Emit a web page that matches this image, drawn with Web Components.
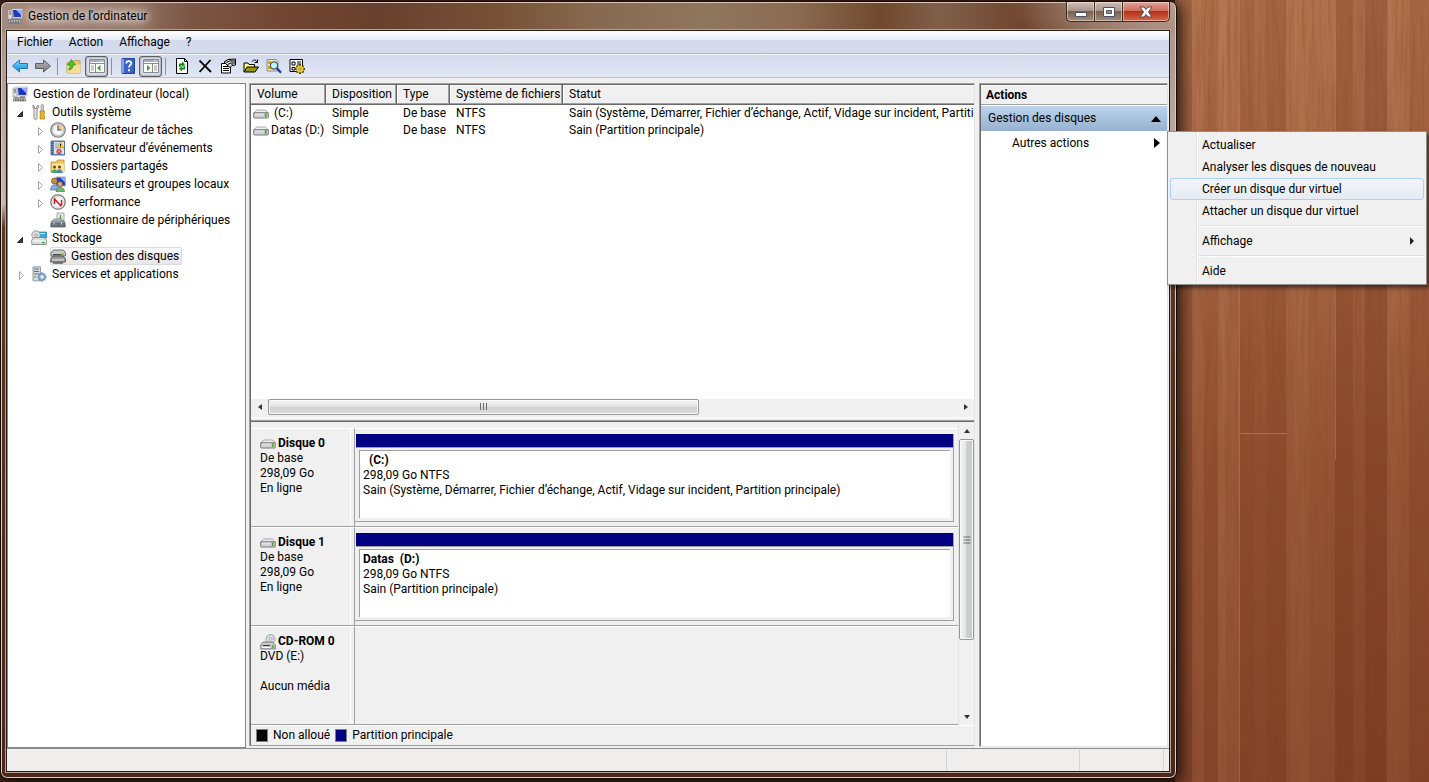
<!DOCTYPE html>
<html lang="fr">
<head>
<meta charset="utf-8">
<title>Gestion de l'ordinateur</title>
<style>
  html, body {
    height: 100%;
    margin: 0;
  }
  body {
    font: 12px/15px Roboto, "Noto Sans", sans-serif;
    color: #000;
    background: #4a2416;
    overflow: hidden;
  }
</style>
</head>
<body>
<desk-top>
  <app-window label="Gestion de l'ordinateur">
    <menu-bar></menu-bar>
    <tool-bar></tool-bar>
    <console-panes>
      <console-tree slot="tree">
        <tree-item icon="computer" root>Gestion de l’ordinateur (local)
          <tree-item slot="children" icon="tools" state="open">Outils système
            <tree-item slot="children" icon="clock" state="closed">Planificateur de tâches</tree-item>
            <tree-item slot="children" icon="events" state="closed">Observateur d’événements</tree-item>
            <tree-item slot="children" icon="shared" state="closed">Dossiers partagés</tree-item>
            <tree-item slot="children" icon="users" state="closed">Utilisateurs et groupes locaux</tree-item>
            <tree-item slot="children" icon="perf" state="closed">Performance</tree-item>
            <tree-item slot="children" icon="device">Gestionnaire de périphériques</tree-item>
          </tree-item>
          <tree-item slot="children" icon="storage" state="open">Stockage
            <tree-item slot="children" icon="disks" selected>Gestion des disques</tree-item>
          </tree-item>
          <tree-item slot="children" icon="services" state="closed">Services et applications</tree-item>
        </tree-item>
      </console-tree>
      <disk-manager slot="main">
        <volume-list slot="list"></volume-list>
        <disk-row icon="drive" name="Disque 0" info="De base|298,09 Go|En ligne" volume="  (C:)" size="298,09 Go NTFS" status="Sain (Système, Démarrer, Fichier d’échange, Actif, Vidage sur incident, Partition principale)"></disk-row>
        <disk-row icon="drive" name="Disque 1" info="De base|298,09 Go|En ligne" volume="Datas  (D:)" size="298,09 Go NTFS" status="Sain (Partition principale)"></disk-row>
        <disk-row icon="cdrom" name="CD-ROM 0" info="DVD (E:)||Aucun média"></disk-row>
      </disk-manager>
      <actions-pane slot="actions">
        <context-menu>
          <menu-item>Actualiser</menu-item>
          <menu-item>Analyser les disques de nouveau</menu-item>
          <menu-item active>Créer un disque dur virtuel</menu-item>
          <menu-item>Attacher un disque dur virtuel</menu-item>
          <menu-item separated submenu>Affichage</menu-item>
          <menu-item separated>Aide</menu-item>
        </context-menu>
      </actions-pane>
    </console-panes>
    <status-bar></status-bar>
  </app-window>
</desk-top>

<script>
const ICONS = {
  computer: `
    <path d="M5 1h10.500l-.5 9H6z" fill="#e8e8e4" stroke="#a9a9a4" stroke-width=".6"/>
    <path d="M6 2h8.500l-.4 7H6.600z" fill="#1d35c4"/><path d="M9 2h5.500l-.4 5z" fill="#8fb2ff"/>
    <path d="M1 2h4v9H1z" fill="#dedede" stroke="#8c8c8c" stroke-width=".6"/><path d="M2 4h2M2 6h2" stroke="#555"/>
    <path d="M8 10h5v1.500H8z" fill="#999"/>
    <path d="M2 11.500h11l1 3.500H1z" fill="#b9bdbd" stroke="#666" stroke-width=".6"/>
    <path d="M3 13h9M3 14.300h9" stroke="#444" stroke-width=".8" stroke-dasharray="1.500 1"/>`,
  back: `<path d="M.5 8L7.500 2v3.500h8v5h-8V14z" fill="url(#g)" stroke="#2079b5"/>
    <defs><linearGradient id="g" x2="0" y2="1"><stop stop-color="#9fe0ff"/><stop offset=".5" stop-color="#3db1ee"/><stop offset="1" stop-color="#2691d6"/></linearGradient></defs>`,
  forward: `<path d="M15.500 8L8.500 2v3.500h-8v5h8V14z" fill="url(#g)" stroke="#5f5f5f"/>
    <defs><linearGradient id="g" x2="0" y2="1"><stop stop-color="#b5b5b5"/><stop offset="1" stop-color="#7d7d7d"/></linearGradient></defs>`,
  up: `<path d="M1 15V4.500h6l1.500-2H14V15z" fill="#e9c66b" stroke="#c0953a" stroke-width=".8"/>
    <path d="M1.500 6.500h13L14 15H1.500z" fill="#f6dc94"/>
    <path d="M4 12c2-1 3-2.500 3-5h2.500L5.500 1.500 1.500 7H4c0 2-.2 3-1.500 4.500z" fill="#4fc02f" stroke="#247a18" stroke-width=".6"/>`,
  paneLeft: `<path d="M.5 1.500h15v13H.5z" fill="#fff" stroke="#878b94"/><path d="M1 2h14v2H1z" fill="#a5abb8"/>
    <path d="M11 3h1M13 3h1" stroke="#fff"/><path d="M1 5.500h14M6.500 6v8" stroke="#878b94"/>
    <path d="M2 8h3M2 10h3M2 12h3" stroke="#999"/><path d="M11.500 7v6L8 10z" fill="#39a32c"/>`,
  paneRight: `<path d="M.5 1.500h15v13H.5z" fill="#fff" stroke="#878b94"/><path d="M1 2h14v2H1z" fill="#a5abb8"/>
    <path d="M11 3h1M13 3h1" stroke="#fff"/><path d="M1 5.500h14M9.500 6v8" stroke="#878b94"/>
    <path d="M11 8h3M11 10h3M11 12h3" stroke="#999"/><path d="M4 7v6l3.500-3z" fill="#39a32c"/>`,
  help: `<path d="M2 .5h12.500v15H2z" fill="#3a62c8" stroke="#2443a0"/><path d="M2 1h2v14H2z" fill="#7f9fe6"/>
    <path d="M6.300 5.500c0-3.200 5-3 5-.3 0 2-2.300 1.900-2.300 4.300" fill="none" stroke="#fff" stroke-width="1.800"/><path d="M8 11.200h2v2H8z" fill="#fff"/>`,
  refresh: `<path d="M2.500.500h8l3 3v12h-11z" fill="#fff" stroke="#000"/><path d="M10.500.500v3h3" fill="none" stroke="#000"/>
    <path d="M5 9V5.500h3V3.500l3 2.800-3 2.700V7.500H6.500V9z" fill="#0d8d1d"/><path d="M11 8v3.500H8v2L5 10.700 8 8v1.700h1.500V8z" fill="#0d8d1d"/>`,
  remove: `<path d="M2.500 2.500L14 14M13.500 2L2.500 14" stroke="#000" stroke-width="1.800" fill="none"/>`,
  properties: `<path d="M1.500 5.500h9v9.500h-9z" fill="#fff" stroke="#000"/><path d="M3 8.500h6M3 10.500h6M3 12.500h6" stroke="#000"/>
    <path d="M4 4l4-2.500L15.500 1v6L12 7.500 10 9.500 7 7z" fill="#ddd" stroke="#000"/><path d="M6 4.500l5-2M7.500 6.500l3.500-1.500M12 2v5M14 2v4" stroke="#000"/>`,
  open: `<path d="M1 14V5h4l1 1.500h5.500V9" fill="#ffff80" stroke="#000"/><path d="M1 14l3-5h11.500l-3.500 5z" fill="#989800" stroke="#000"/>
    <path d="M9 3.500c1.500-2 4-2 5 .5M14.500 1.500v3h-3" fill="none" stroke="#000"/>`,
  find: `<path d="M1 1.500h9l2 2V13H1z" fill="#e8e4c0" stroke="#777" stroke-width=".8"/><path d="M2 3h3v3H2zM2 8h3v3H2z" fill="#c9a72d"/>
    <circle cx="8" cy="7.500" r="3.700" fill="#b5f3ff" stroke="#333"/><path d="M10.800 10.300L15 14.800" stroke="#1c2fb5" stroke-width="2.200"/>`,
  settings: `<path d="M1 1.500h12.500v12H1z" fill="#fff" stroke="#000"/><path d="M3 4h3v3H3z" fill="none" stroke="#000"/><path d="M3 9.500h3v2.500H3z" fill="none" stroke="#000"/><path d="M8 4h4M8 6h4" stroke="#000"/>
    <path d="M11 6v10M6 11h10M7.500 7.500l7 7M14.500 7.500l-7 7" stroke="#4d4200" stroke-width="2"/>
    <circle cx="11" cy="11" r="3.600" fill="#f5dc32" stroke="#8a7600" stroke-width=".7"/><circle cx="11" cy="11" r="1.200" fill="#fff" stroke="#4d4200" stroke-width=".6"/>`,
  tools: `<path d="M2 1v3l1 2v8.500c0 1.300 3 1.300 3 0V6l1.300-2V1L5.800 2.500v2H3.500v-2z" fill="#e4e4e4" stroke="#777" stroke-width=".8"/>
    <path d="M10 .8h2.500V7H10z" fill="#c9c9c9" stroke="#888" stroke-width=".6"/><path d="M9 7h4.500v2l-.8 1 .8 1.500V15H9v-3.500l.8-1.500L9 9z" fill="#f0b323" stroke="#b57b0a" stroke-width=".7"/>`,
  clock: `<circle cx="8" cy="8" r="7.300" fill="#d4d4d4" stroke="#777" stroke-width="1.100"/><circle cx="8" cy="8" r="5.500" fill="#f4f8fc" stroke="#aaa" stroke-width=".6"/>
    <path d="M8 8h5A5 5 0 0 0 8 3z" fill="#f3cf7a"/><path d="M8 3.500V8h3.500" fill="none" stroke="#444" stroke-width="1.100"/>`,
  events: `<path d="M1 1h13.500v14H1z" fill="#6f8fca" stroke="#3e5a92" stroke-width=".8"/><path d="M4 2h10v12H4z" fill="#dbe6f7"/><path d="M1.500 3h2M1.500 5.500h2M1.500 8h2M1.500 10.500h2M1.500 13h2" stroke="#27364f" stroke-width=".8"/>
    <path d="M5 4h3M5 6h2M5 8h2" stroke="#8194b8"/><path d="M10.500 2l3.500 6H7z" fill="#ffd52c" stroke="#b58b00" stroke-width=".6"/><path d="M10.500 4v2M10.500 6.600v.8" stroke="#000" stroke-width=".9"/>
    <circle cx="9" cy="11.500" r="2.600" fill="#d93535"/><path d="M8 10.500l2 2m0-2l-2 2" stroke="#fff" stroke-width=".8"/>`,
  shared: `<path d="M1 14V4h5l1.500-2H14v12z" fill="#efc75c" stroke="#b98d2c" stroke-width=".8"/><path d="M2 5.500h12V14H2z" fill="#ffe393"/>
    <circle cx="4.500" cy="9" r="1.500" fill="#6a4420"/><circle cx="9.500" cy="9" r="1.500" fill="#6a4420"/><path d="M1.500 15c0-5 6-5 6 0z" fill="#53a550"/><path d="M6.500 15c0-5 6-5 6 0z" fill="#3d87c9"/>`,
  users: `<path d="M6 1h9.500v9H6z" fill="#1d40c6" stroke="#b5b8bd"/><path d="M10 1.500h5v5z" fill="#8bb0ff"/>
    <circle cx="4.500" cy="5" r="3" fill="#c78c50" stroke="#6f4a22" stroke-width=".7"/><path d="M.500 14c0-7 8-7 8 0z" fill="#8aaede" stroke="#44689c" stroke-width=".6"/>
    <circle cx="10" cy="8" r="2.600" fill="#dfab78" stroke="#70451d" stroke-width=".7"/><path d="M6 15.700c0-6 8.500-6 8.500 0z" fill="#6eb577" stroke="#367540" stroke-width=".6"/>`,
  perf: `<circle cx="8" cy="8" r="7.200" fill="#fff" stroke="#777" stroke-width="1.300"/><circle cx="8" cy="8" r="5.300" fill="none" stroke="#c3c3c3" stroke-width=".8"/><path d="M4.500 10V5l6 6.500 1-.5V6" fill="none" stroke="#d51b1b" stroke-width="1.500"/>`,
  device: `<path d="M7 1h7v8H7z" fill="#e8ebea" stroke="#909594" stroke-width=".8"/><path d="M10.500 3v4" stroke="#49a443" stroke-width="1.500"/><path d="M2 9l2-2h7l3 2z" fill="#c5cbd0" stroke="#68717a" stroke-width=".7"/>
    <path d="M.8 9h14.400v2.500H.8z" fill="#8b969e"/><path d="M.8 11.500h14.400V15H.8z" fill="#68747d" stroke="#3e474e" stroke-width=".6"/><path d="M4 10.500v2M11.500 10.500v2" stroke="#e6e6e6"/>`,
  storage: `<path d="M7 2h8.500v6H7z" fill="#33a9de" stroke="#227ba6" stroke-width=".7"/><path d="M8 3h6v1H8z" fill="#b7e8fb"/><circle cx="5" cy="5" r="4.200" fill="#dfe2df" stroke="#858a86" stroke-width=".8"/><circle cx="5" cy="5" r="1.300" fill="#fff" stroke="#777" stroke-width=".6"/>
    <path d="M.800 10l2-2.500h10.500l2 2.500v4.500H.800z" fill="#dcdede" stroke="#777c7e" stroke-width=".8"/><path d="M1 11h14" stroke="#fff"/><path d="M11 12.500h2.500" stroke="#2faa2a" stroke-width="1.500"/>`,
  disks: `<path d="M1 5l2.500-3h10L15.500 5v3H1z" fill="#c9cbca" stroke="#565656" stroke-width=".8"/><path d="M3 6.500h8" stroke="#444"/><path d="M12.500 5v2.500" stroke="#57bd26" stroke-width="1.800"/>
    <path d="M.800 11L3 8h10l2.500 3v3H.800z" fill="#989a99" stroke="#444" stroke-width=".8"/><path d="M2 12h12" stroke="#ececec"/><path d="M3 15h10" stroke="#555" stroke-width="1.400"/>`,
  services: `<path d="M2 .8h7.500v14H2z" fill="#d8dde1" stroke="#7d868e" stroke-width=".8"/><path d="M3 3h5M3 5.500h5M3 8h5" stroke="#606a73" stroke-width="1.200"/><path d="M3 11h2" stroke="#35a635" stroke-width="1.200"/>
    <circle cx="11" cy="11" r="3.400" fill="#a7c3e0" stroke="#547ba5" stroke-width=".8"/><path d="M11 6.300v2M11 13.700v2M6.300 11h2M13.700 11h2M7.700 7.700l1.300 1.300M13 13l1.300 1.300M14.300 7.700L13 9M9 13l-1.300 1.300" stroke="#6a90ba" stroke-width="1.500"/><circle cx="11" cy="11" r="1.200" fill="#fff"/>`,
  drive: `<path d="M1 7l2.500-3h9L15 7z" fill="#f0f0f0" stroke="#888" stroke-width=".7"/><path d="M.7 6.800h14.600v4.400c0 .5-.3.800-.8.800h-13c-.5 0-.8-.3-.8-.8z" fill="#d2d3d9" stroke="#6b6b6b" stroke-width=".9"/>
    <path d="M2 8h9" stroke="#eef" stroke-width=".8"/><path d="M12.700 7.500v3.500" stroke="#46a81f" stroke-width="1.800"/>`,
  cdrom: `<circle cx="10.500" cy="5" r="4.500" fill="#dcdde2" stroke="#888" stroke-width=".7"/><path d="M10.500 5l-3-3.300A4.300 4.300 0 0 1 10 .8z" fill="#b3ddb3"/><path d="M10.500 5l4-2a4 4 0 0 1 .2 3z" fill="#d1b9dc"/><circle cx="10.500" cy="5" r="1.300" fill="#fff" stroke="#888" stroke-width=".6"/>
    <path d="M.7 11l2.500-3h9.600l2.500 3v4H.7z" fill="#c9cacc" stroke="#666" stroke-width=".8"/><path d="M3 11.500h7" stroke="#333"/><path d="M2 13.500h8" stroke="#fff"/><path d="M12.800 11v3" stroke="#49b21d" stroke-width="1.600"/>`
};

const esc = text => text.replace(/&/g, "&amp;").replace(/</g, "&lt;");

class BaseElement extends HTMLElement {
  connectedCallback() {
    if (this.shadowRoot) return;
    this.attachShadow({ mode: "open" }).innerHTML = this.render();
  }
}

class MmcIcon extends BaseElement {
  render() {
    return `
    <style>
      :host { display: block; flex: none; width: 16px; height: 16px; white-space: normal; }
      svg { display: block; }
    </style>
    <svg width="16" height="16" viewBox="0 0 16 16" aria-hidden="true">${ICONS[this.getAttribute("name")]}</svg>`;
  }
}

class DeskTop extends BaseElement {
  // [x, width, colour, opacity] of each board strip
  strips = [
    [0, 17, "#3a1a0c", 0.12], [17, 12, "#c98a62", 0.12], [29, 14, "#7c3418", 0.08],
    [43, 8, "#dba27a", 0.16], [51, 13, "#c68a62", 0.14], [64, 15, "#72290f", 0.14],
    [79, 13, "#823c20", 0.1], [92, 19, "#6e2a10", 0.18], [111, 5, "#c07c54", 0.1],
    [116, 18, "#c98b64", 0.14], [134, 12, "#b06b42", 0.1], [146, 14, "#c98b64", 0.05],
    [160, 18, "#5e1f0b", 0.2], [178, 12, "#84391e", 0.12], [190, 22, "#5a1d0c", 0.22],
    [212, 12, "#c28058", 0.12], [224, 10, "#b4714a", 0.1], [234, 20, "#6e2a12", 0.14]
  ];

  render() {
    return `
    <style>
      :host { display: grid; height: 100%; }
      .wood, .content { grid-area: 1 / 1; min-height: 0; min-width: 0; }
      .wood { justify-self: end; width: 254px; height: 100%; display: block; }
      .content { display: flex; padding: 1px 252px 3px 0; }
      ::slotted(*) { flex: 1; }
    </style>
    <svg class="wood" aria-hidden="true">
      <defs>
        <linearGradient id="base" x2="0" y2="1">
          <stop stop-color="#b1734f"/><stop offset=".35" stop-color="#a26140"/>
          <stop offset=".6" stop-color="#935133"/><stop offset="1" stop-color="#85452c"/>
        </linearGradient>
        <filter id="grain" x="0" y="0" width="100%" height="100%">
          <feTurbulence type="fractalNoise" baseFrequency=".3 .012" numOctaves="4" seed="7"/>
          <feColorMatrix values="0 0 0 0 .22  0 0 0 0 .07  0 0 0 0 .02  1.6 0 0 0 -.62"/>
        </filter>
      </defs>
      <rect width="100%" height="100%" fill="url(#base)"/>
      ${this.strips.map(([x, w, c, o]) => `<rect x="${x}" width="${w}" height="100%" fill="${c}" opacity="${o}"/>`).join("")}
      <path d="M64.500 0v800M160.500 0v460" stroke="#d09a78" stroke-opacity=".4"/>
      <path d="M65 433.500h47" stroke="#c98f6c" stroke-opacity=".6"/>
      <rect width="100%" height="100%" filter="url(#grain)" opacity=".5"/>
    </svg>
    <div class="content"><slot></slot></div>`;
  }
}

class AppWindow extends BaseElement {
  render() {
    return `
    <style>
      :host {
        box-sizing: border-box; display: flex; flex-direction: column; min-width: 0;
        border: 1px solid #150b07; border-radius: 7px;
        padding: 0 6px 6px 5px;
        box-shadow: 2px 2px 14px 2px rgba(0, 0, 0, .75), inset 0 0 0 1px #d9cbc3;
        background:
          radial-gradient(ellipse 170px 60px at 100% 0, #b79c8f, transparent),
          linear-gradient(90deg, #a48a7e, #8f6f60 12%, #7c5645 16%, #70452f 25%, #67412d 32%, #765035 42%, #86694e 50%, #8f775c 60%, #8a6a50 68%, #70492d 75%, #80604a 80%, #6f452c 87%, #a08676) 0 0 / 100% 30px no-repeat,
          linear-gradient(#a58d83, #c9b8b0 26%, #5c3626 29%, #54301f 60%, #4c281b);
      }
      header { display: flex; height: 28px; padding-left: 1px; }
      .caption { flex: 1; display: flex; align-items: center; gap: 5px; }
      h1 {
        margin: 0; font: inherit;
        text-shadow: 0 0 6px #fff, 0 0 10px #f3ebe6, 0 0 14px #e6d8d0, 0 0 20px #e6d8d0;
      }
      .buttons { display: flex; height: 20px; }
      .buttons button {
        display: flex; align-items: center; justify-content: center;
        width: 28px; padding: 0; border: 1px solid #3c2c25; border-top: 0; border-right: 0;
        box-shadow: inset 0 0 0 1px rgba(255, 255, 255, .45);
        background: linear-gradient(#cfc0b8, #ab958a 45%, #7b6050 50%, #a38b79);
      }
      .buttons .min { border-radius: 0 0 0 5px; }
      .buttons .close {
        width: 48px; border-right: 1px solid #3c2c25; border-radius: 0 0 5px 0;
        background: linear-gradient(#e3a396, #cf6e5c 45%, #b52f18 50%, #d4694a);
      }
      .client {
        flex: 1; display: flex; flex-direction: column; min-height: 0;
        border: 1px solid #2a1a14; outline: 1px solid #b5a196; background: #f0f0f0;
      }
    </style>
    <header>
      <div class="caption"><mmc-icon name="computer"></mmc-icon><h1>${esc(this.getAttribute("label"))}</h1></div>
      <div class="buttons">
        <button class="min" aria-label="Réduire"><svg width="14" height="12"><path d="M1.500 6.500h11v4h-11z" fill="#fff" stroke="#4b5468"/></svg></button>
        <button aria-label="Agrandir"><svg width="12" height="10"><path d="M.5.500h11v9H.5z" fill="#fff" stroke="#4b5468"/><path d="M3.500 3.500h5v3h-5z" fill="#a58f83" stroke="#4b5468"/></svg></button>
        <button class="close" aria-label="Fermer"><svg width="14" height="12"><path d="M1 1h4l2 2.500L9 1h4L9.500 6l3.500 5H9L7 8.500 5 11H1l3.500-5z" fill="#fff" stroke="#5a4550"/></svg></button>
      </div>
    </header>
    <div class="client"><slot></slot></div>`;
  }
}

class MenuBar extends BaseElement {
  render() {
    return `
    <style>
      :host {
        display: flex; height: 22px; padding-left: 2px;
        border-bottom: 1px solid #b5b9c2;
        background: linear-gradient(#fff, #e8ecf6 40%, #d3daed 41%, #d5dcee);
      }
      button { font: inherit; border: 0; padding: 0 8px; background: none; }
    </style>
    ${["Fichier", "Action", "Affichage", "?"].map(t => `<button>${t}</button>`).join("")}`;
  }
}

class ToolBar extends BaseElement {
  items = ["back:Précédent", "forward:Suivant", "", "up:Dossier parent", "paneLeft:Arborescence", "",
    "help:Aide", "paneRight:Volet Actions", "", "refresh:Actualiser", "remove:Supprimer",
    "properties:Propriétés", "open:Ouvrir", "find:Rechercher", "settings:Paramètres"];

  render() {
    return `
    <style>
      :host {
        display: flex; align-items: center; height: 22px; padding-left: 1px;
        border-bottom: 1px solid #b9c2d9; border-top: 1px solid #f8f9fc;
        background: linear-gradient(#d3daed, #e3e8f5);
      }
      button {
        box-sizing: border-box; display: flex; align-items: center; justify-content: center;
        width: 23px; height: 21px; padding: 0; border: 1px solid transparent; background: none;
      }
      .on { border: 1px solid #5b6069; border-radius: 3px; background: #dde0e8; box-shadow: inset 0 0 2px #5b6069; }
      hr { width: 1px; height: 17px; margin: 0 4px 0 3px; border: 0; background: #8c919d; }
    </style>
    ${this.items.map(item => {
      if (!item) return "<hr>";
      const [icon, label] = item.split(":");
      return `<button class="${icon.startsWith("pane") ? "on" : ""}" aria-label="${label}"><mmc-icon name="${icon}"></mmc-icon></button>`;
    }).join("")}`;
  }
}

class ConsolePanes extends BaseElement {
  render() {
    return `
    <style>
      :host {
        flex: 1; min-height: 0; display: grid; padding-top: 5px;
        grid-template-columns: 239px minmax(0, 1fr) 190px; column-gap: 3px;
      }
      ::slotted([slot="main"]) { margin: 0 1px 2px 0; }
      ::slotted([slot="actions"]) { margin: 0 1px 1px 0; }
    </style>
    <slot name="tree"></slot><slot name="main"></slot><slot name="actions"></slot>`;
  }
}

class ConsoleTree extends BaseElement {
  render() {
    return `
    <style>
      :host { display: block; border: 1px solid #828790; background: #fff; padding: 1px 0 0 4px; }
    </style>
    <slot></slot>`;
  }
}

class TreeItem extends BaseElement {
  render() {
    const arrows = {
      open: `<path d="M6.500 3.500v5h-5z" fill="#404040" stroke="#262626"/>`,
      closed: `<path d="M3.500 1.500v8l4-4z" fill="#fff" stroke="#a6a6a6"/>`
    };
    const arrow = arrows[this.getAttribute("state")];
    return `
    <style>
      :host { display: block; }
      .row { display: flex; align-items: center; height: 18px; }
      .toggle { width: 19px; height: 18px; padding: 2px 0 0 4px; border: 0; background: none; display: flex; align-items: center; box-sizing: border-box; }
      :host([root]) .toggle { display: none; }
      .label {
        box-sizing: border-box; display: flex; align-items: center; gap: 5px;
        height: 18px; padding-right: 3px; white-space: nowrap;
      }
      :host([selected]) .label {
        border-radius: 2px; box-shadow: inset 0 0 0 1px #dcdcdc;
        background: linear-gradient(#fafafa, #e6e6e6);
      }
      .children { padding-left: 19px; }
      :host([root]) .children { padding-left: 0; }
    </style>
    <div class="row">
      ${arrow ? `<button class="toggle" aria-label="Développer"><svg width="10" height="11">${arrow}</svg></button>` : `<span class="toggle"></span>`}
      <span class="label"><mmc-icon name="${this.getAttribute("icon")}"></mmc-icon><span><slot></slot></span></span>
    </div>
    <div class="children"><slot name="children"></slot></div>`;
  }
}

class ScrollBar extends BaseElement {
  render() {
    return `
    <style>
      :host { display: flex; flex: none; background: #f0f0f0; box-sizing: border-box; }
      :host([horizontal]) { height: 16px; }
      :host([vertical]) { width: 16px; flex-direction: column; border-left: 1px solid #e3e3e3; }
      button { flex: 0 0 17px; padding: 0; border: 0; background: none; display: flex; align-items: center; justify-content: center; }
      .thumb {
        box-sizing: border-box; display: flex; align-items: center; justify-content: center;
        flex: var(--thumb); border: 1px solid #979797; border-radius: 2px;
        box-shadow: inset 0 0 0 1px #fafafa;
        background: linear-gradient(#f3f3f3, #e6e6e8 45%, #cfd0d4 50%, #dcdcdf);
      }
      :host([vertical]) .thumb { background: linear-gradient(90deg, #f3f3f3, #e6e6e8 45%, #cfd0d4 50%, #c6c7cb); }
      .rest { flex: var(--rest); }
      :host([vertical]) svg { transform: rotate(90deg); }
    </style>
    <button aria-label="Défiler avant"><svg width="8" height="8"><path d="M6 1v6L2 4z" fill="#333"/></svg></button>
    <div class="thumb"><svg width="9" height="8"><path d="M1.500 0v7M4.500 0v7M7.500 0v7" stroke="#6b6b6b"/></svg></div>
    <div class="rest"></div>
    <button aria-label="Défiler après"><svg width="8" height="8"><path d="M2 1v6l4-3z" fill="#333"/></svg></button>`;
  }
}

class VolumeList extends BaseElement {
  columns = [["Volume", 75], ["Disposition", 71], ["Type", 53], ["Système de fichiers", 113], ["Statut", 600]];
  rows = [
    [" (C:)", "Simple", "De base", "NTFS", "Sain (Système, Démarrer, Fichier d’échange, Actif, Vidage sur incident, Partition principale)"],
    ["Datas (D:)", "Simple", "De base", "NTFS", "Sain (Partition principale)"]
  ];

  render() {
    return `
    <style>
      :host { flex: 1; display: flex; flex-direction: column; min-height: 0; background: #fff; }
      .body { flex: 1; overflow: hidden; }
      table { table-layout: fixed; width: 912px; border-collapse: separate; border-spacing: 0; }
      th, td { box-sizing: border-box; padding: 0 0 0 6px; text-align: left; font-weight: normal; white-space: pre; overflow: hidden; }
      th {
        height: 20px; background: #f0f0f0; border-right: 1px solid #696969; border-bottom: 1px solid #696969;
        box-shadow: inset -1px -1px #a0a0a0, inset 1px 1px #fff;
      }
      td { height: 17px; }
      .name { display: flex; align-items: center; gap: 2px; margin-left: -4px; }
      scroll-bar { --thumb: 430; --rest: 259; }
    </style>
    <div class="body">
      <table>
        <colgroup>${this.columns.map(c => `<col style="width: ${c[1]}px">`).join("")}</colgroup>
        <thead><tr>${this.columns.map(c => `<th>${c[0]}</th>`).join("")}</tr></thead>
        <tbody>${this.rows.map(row => `<tr>${row.map((cell, i) =>
          i ? `<td>${cell}</td>` : `<td><span class="name"><mmc-icon name="drive"></mmc-icon><span>${cell}</span></span></td>`).join("")}</tr>`).join("")}
        </tbody>
      </table>
    </div>
    <scroll-bar horizontal></scroll-bar>`;
  }
}

class DiskRow extends BaseElement {
  render() {
    const get = name => esc(this.getAttribute(name) || "");
    const partition = this.hasAttribute("volume") ? `
      <div class="frame">
        <div class="bar"></div>
        <div class="partition"><b>${get("volume")}</b><span>${get("size")}</span><span>${get("status")}</span></div>
      </div>` : "";
    return `
    <style>
      :host { display: flex; height: 98px; border-bottom: 1px solid #a0a0a0; }
      .disk {
        box-sizing: border-box; flex: 0 0 104px; padding: 7px 0 0 9px; overflow: hidden;
        border-top: 1px solid #fff; border-right: 1px solid #a0a0a0;
        box-shadow: inset -3px 0 #f0f0f0, inset -4px 0 #fff;
      }
      .title { display: flex; align-items: center; gap: 2px; height: 15px; font-weight: bold; }
      .info { display: block; min-height: 15px; }
      .space { flex: 1; min-width: 0; display: flex; border-top: 1px solid #fff; padding: 5px 4px 4px 0; }
      .frame {
        flex: 1; min-width: 0; display: flex; flex-direction: column; background: #f0f0f0;
        border-right: 1px solid #a0a0a0; border-bottom: 1px solid #a0a0a0;
      }
      .bar { height: 13px; margin: 0 0 2px 1px; background: #000080; border-bottom: 1px solid #a0a0a0; }
      .partition {
        flex: 1; display: flex; flex-direction: column; margin: 0 3px 3px 4px; padding: 2px 3px; overflow: hidden;
        border-top: 1px solid #a0a0a0; border-left: 1px solid #a0a0a0; background: #fff;
      }
      b { white-space: pre; }
    </style>
    <div class="disk">
      <div class="title"><mmc-icon name="${get("icon")}"></mmc-icon>${get("name")}</div>
      ${get("info").split("|").map(t => `<span class="info">${t}</span>`).join("")}
    </div>
    <div class="space">${partition}</div>`;
  }
}

class DiskManager extends BaseElement {
  render() {
    return `
    <style>
      :host {
        display: flex; flex-direction: column; min-height: 0; min-width: 0;
        border: 1px solid #a0a0a0; border-right-color: #e3e3e3;
        box-shadow: inset 1px 1px #696969; padding: 1px 0 0 1px;
      }
      .splitter { flex: none; height: 6px; border-bottom: 1px solid #696969; box-shadow: inset 0 -1px #a0a0a0, inset 0 -3px #f0f0f0, inset 0 -4px #fff; }
      .disks { display: flex; }
      .rows { flex: 1; min-width: 0; padding-top: 6px; }
      .legend { display: flex; align-items: center; gap: 5px; height: 19px; padding-left: 5px; border-top: 1px solid #fff; }
      i { width: 10px; height: 11px; border: 1px solid #808080; }
      .free { background: #000; }
      .primary { background: #000080; }
      scroll-bar { --thumb: 200; --rest: 68; }
    </style>
    <slot name="list"></slot>
    <div class="splitter"></div>
    <div class="disks">
      <div class="rows"><slot></slot></div>
      <scroll-bar vertical></scroll-bar>
    </div>
    <div class="legend"><i class="free"></i>Non alloué<i class="primary"></i>Partition principale</div>`;
  }
}

class ActionsPane extends BaseElement {
  render() {
    return `
    <style>
      :host {
        display: block; border: 1px solid #a0a0a0; border-right-color: #e3e3e3; border-bottom-color: #e3e3e3;
        box-shadow: inset 1px 1px #696969; padding: 2px 0 0 1px; background: #fff;
      }
      h2 { margin: 0; padding: 2px 5px 1px; font: inherit; font-weight: bold; background: #f0f0f0; border-bottom: 1px solid #a0a0a0; }
      button {
        box-sizing: border-box; display: flex; width: 100%; align-items: center; justify-content: space-between;
        height: 25px; padding: 0 6px 0 7px; border: 0; font: inherit; background: none;
      }
      .group { margin-top: 1px; background: linear-gradient(#bcd4ec, #97b1d0); }
      .more { position: relative; }
      .more button { height: 24px; padding-left: 31px; }
      ::slotted(context-menu) { position: absolute; top: 0; left: 100%; z-index: 1; }
    </style>
    <h2>Actions</h2>
    <button class="group">Gestion des disques<svg width="10" height="6"><path d="M0 6h10L5 0z"/></svg></button>
    <div class="more">
      <button>Autres actions<svg width="8" height="10"><path d="M1 0v10l6-5z"/></svg></button>
      <slot></slot>
    </div>`;
  }
}

class ContextMenu extends BaseElement {
  render() {
    return `
    <style>
      :host {
        box-sizing: border-box; display: block; width: 260px; padding: 2px;
        border: 1px solid #8f8f8f; box-shadow: 3px 3px 4px rgba(0, 0, 0, .5);
        background: linear-gradient(90deg, transparent 28px, #e2e3e3 28px 29px, #fff 29px 30px, transparent 30px) #f0f0f0;
      }
    </style>
    <slot></slot>`;
  }
}

class MenuItem extends BaseElement {
  render() {
    return `
    <style>
      :host { display: block; }
      hr { height: 1px; margin: 3px 0 3px 28px; border: 0; border-bottom: 1px solid #fff; background: #e0e0e0; }
      button {
        box-sizing: border-box; display: flex; align-items: center; justify-content: space-between;
        width: 100%; height: 22px; padding: 0 8px 0 31px;
        border: 1px solid transparent; border-radius: 3px; font: inherit; background: none;
      }
      :host([active]) button { border-color: #aecff7; background: linear-gradient(rgba(243, 246, 251, .8), rgba(226, 234, 246, .8)); }
    </style>
    ${this.hasAttribute("separated") ? "<hr>" : ""}
    <button><slot></slot>${this.hasAttribute("submenu") ? `<svg width="5" height="8"><path d="M0 0v8l4-4z" fill="#222"/></svg>` : ""}</button>`;
  }
}

class StatusBar extends BaseElement {
  render() {
    return `
    <style>
      :host { display: flex; height: 21px; padding: 1px 5px 0 0; border-top: 1px solid #8c8c8c; background: #f0eded; }
      span { border-right: 1px solid #d0d4d6; flex: 0 0 132px; }
      .message { flex: 1; }
      .progress { flex-basis: 83px; }
    </style>
    <span class="message"></span><span></span><span class="progress"></span>`;
  }
}

customElements.define("mmc-icon", MmcIcon);
customElements.define("desk-top", DeskTop);
customElements.define("app-window", AppWindow);
customElements.define("menu-bar", MenuBar);
customElements.define("tool-bar", ToolBar);
customElements.define("console-panes", ConsolePanes);
customElements.define("console-tree", ConsoleTree);
customElements.define("tree-item", TreeItem);
customElements.define("scroll-bar", ScrollBar);
customElements.define("volume-list", VolumeList);
customElements.define("disk-row", DiskRow);
customElements.define("disk-manager", DiskManager);
customElements.define("actions-pane", ActionsPane);
customElements.define("context-menu", ContextMenu);
customElements.define("menu-item", MenuItem);
customElements.define("status-bar", StatusBar);
</script>
</body>
</html>
